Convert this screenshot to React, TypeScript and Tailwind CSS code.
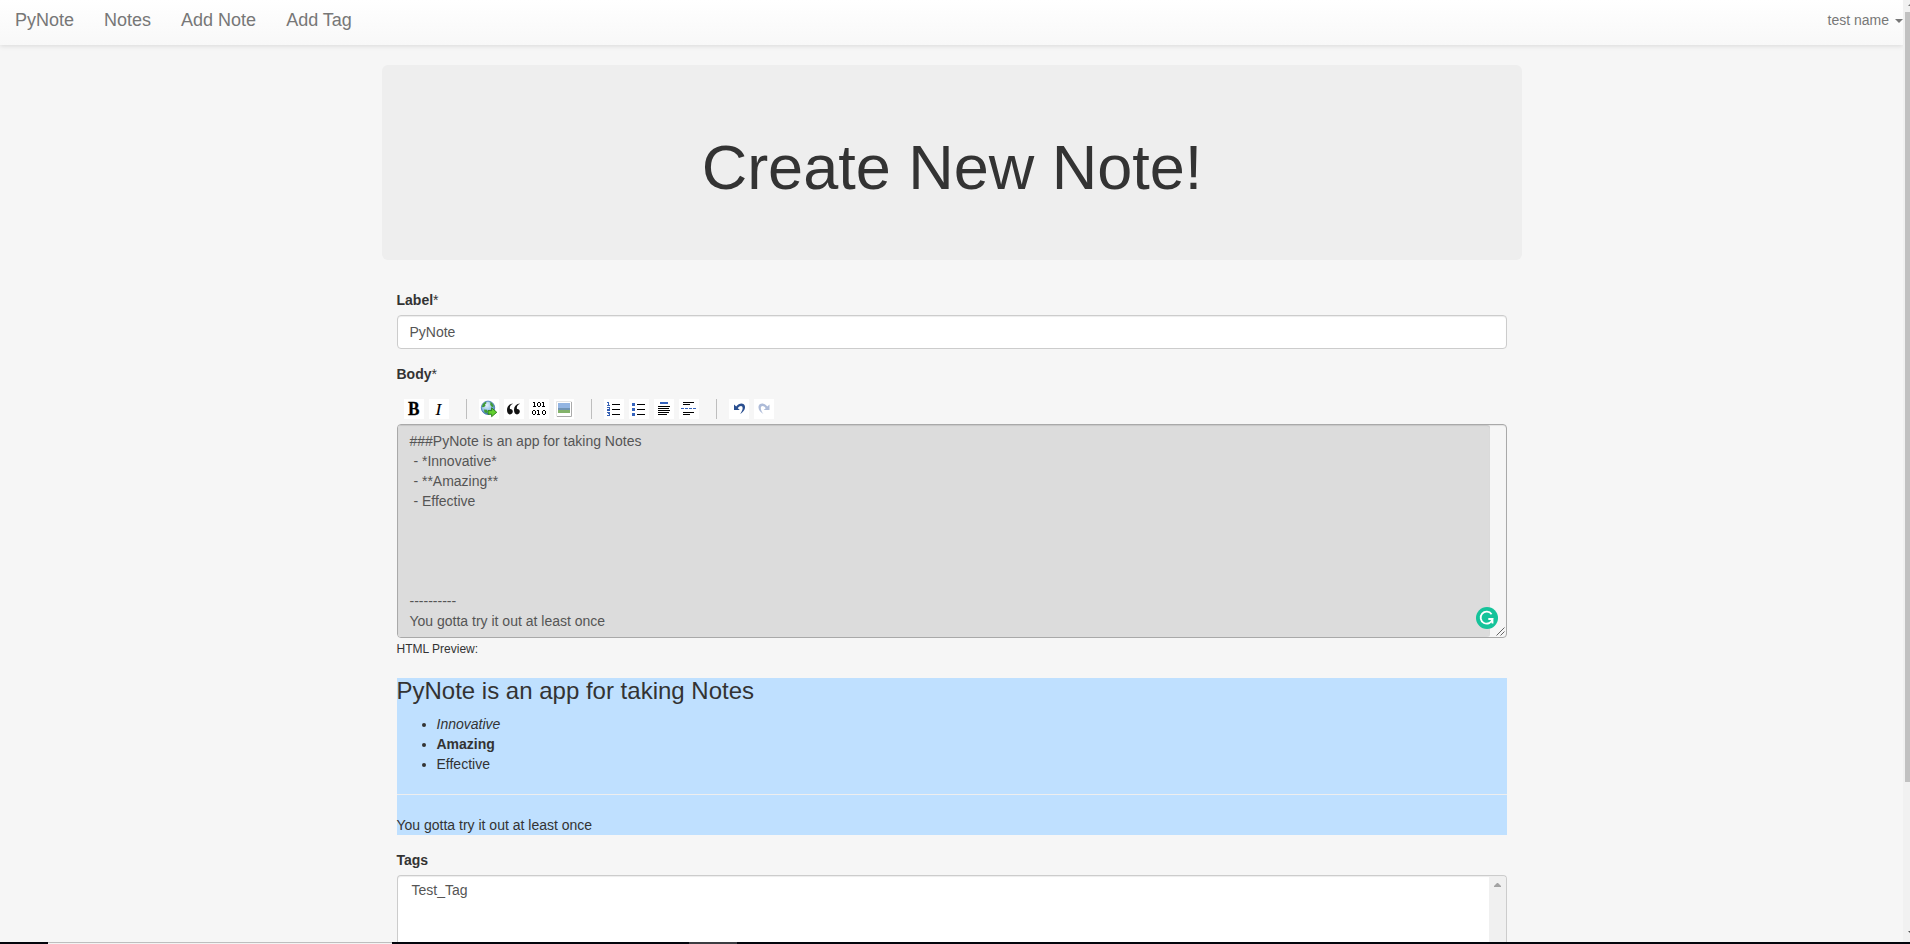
import React from 'react';

function Tool({ label, children }: { label: string; children: React.ReactNode }) {
  return (
    <button type="button" aria-label={label} className="size-5 shrink-0 bg-white">
      <svg width="20" height="20" viewBox="0 0 20 20" className="block">
        {children}
      </svg>
    </button>
  );
}

function Separator() {
  return <span className="ml-[17px] mr-3 h-5 w-px shrink-0 bg-[#bebebe]" />;
}

function Toolbar() {
  return (
    <div className="mt-[15px] flex h-5 items-center pl-[7.5px]">
      <div className="flex gap-[5px]">
        <Tool label="Strong">
          <text x="9.800" y="16" textAnchor="middle" fontSize="18" fontWeight="bold" fontFamily="Liberation Serif, serif" textLength="11.500" lengthAdjust="spacingAndGlyphs" stroke="#000" strokeWidth="0.3">B</text>
        </Tool>
        <Tool label="Emphasis">
          <text x="9.300" y="16" textAnchor="middle" fontSize="17.500" fontStyle="italic" fontFamily="Liberation Serif, serif" stroke="#000" strokeWidth="0.1">I</text>
        </Tool>
      </div>
      <Separator />
      <div className="flex gap-[5px]">
        <Tool label="Hyperlink">
          <defs>
            <radialGradient id="globe" cx="0.4" cy="0.3" r="0.75">
              <stop offset="0" stopColor="#e6f2fc" />
              <stop offset="0.5" stopColor="#9cc6ea" />
              <stop offset="1" stopColor="#2f65a8" />
            </radialGradient>
          </defs>
          <circle cx="9" cy="8.800" r="6.700" fill="url(#globe)" stroke="#3f74ad" strokeWidth="0.8" />
          <path d="M3.200 6.500C4 4.400 5.500 3.200 7.200 2.800L7.400 4.200L6 5.500L6.500 6.800L5 8L3 8.200Z M10.500 3L12.800 3.800L14.600 6.400L14.200 8.200L12.400 7.400L11.200 5.800L11.400 4.600Z M5 10.400L8 10.800L8.600 12.400L7.400 14.300L5.400 13.200Z" fill="#3f9b35" />
          <path d="M9 11.600H12.600V8.800L17.800 13.300L12.600 17.700V15.200H9Z" fill="#62d02f" stroke="#277c18" strokeWidth="0.9" />
        </Tool>
        <Tool label="Blockquote">
          <path d="M8.500 4.500C5 5.200 3 7.500 3 11C3 13.800 4.200 15.400 6 15.400C7.700 15.400 8.800 14.200 8.800 12.600C8.800 10.900 7.700 9.800 6 9.900C5.300 7.700 6.800 5.900 8.600 5.100Z M15.500 4.500C12 5.200 10 7.500 10 11C10 13.800 11.200 15.400 13 15.400C14.700 15.400 15.800 14.200 15.800 12.600C15.800 10.900 14.700 9.800 13 9.900C12.300 7.700 13.800 5.900 15.600 5.100Z" fill="#111" />
        </Tool>
        <Tool label="Code Sample">
          <g fill="none" stroke="#000" strokeWidth="1" shapeRendering="crispEdges">
            <path d="M4 3.500H6M5.500 3V8M4 7.500H7M8.500 4V7M9 3.500H11M11.500 4V7M9 7.500H11M13 3.500H15M14.500 3V8M13 7.500H16" />
            <path d="M3.500 12V15M4 11.500H6M6.500 12V15M4 15.500H6M8 11.500H10M9.500 11V16M8 15.500H11M13.500 12V15M14 11.500H16M16.500 12V15M14 15.500H16" />
          </g>
        </Tool>
        <Tool label="Image">
          <path d="M2.500 17.500V2.500H17.500" fill="none" stroke="#e4e4e4" />
          <path d="M3 17.500H17.500V3" fill="none" stroke="#aaa" />
          <rect x="4" y="4" width="12" height="5" fill="#93b5e2" />
          <rect x="4" y="9" width="12" height="2" fill="#7194b4" />
          <rect x="4" y="11" width="12" height="3" fill="#83b36b" />
        </Tool>
      </div>
      <Separator />
      <div className="flex gap-[5px]">
        <Tool label="Numbered List">
          <path d="M8 5.500H16M8 10.500H16M8 15.500H16" stroke="#000" shapeRendering="crispEdges" />
          <path d="M3 3.500H5M4.500 3V7M3 6.500H6M3 8.500H5.500V10.500H3.500V11.500H6M3 13.500H5.500V16.500H3M4 14.500H5.500" fill="none" stroke="#3560b4" shapeRendering="crispEdges" />
        </Tool>
        <Tool label="Bulleted List">
          <path d="M8 5.500H16M8 10.500H16M8 15.500H16" stroke="#000" shapeRendering="crispEdges" />
          <path d="M3 4H6V7H3ZM3 9H6V12H3ZM3 14H6V17H3Z" fill="#3563bd" />
        </Tool>
        <Tool label="Heading">
          <path d="M6 3H14V5H6Z" fill="#3563bd" />
          <path d="M4 7.500H16M4 9.500H15M4 11.500H16M4 13.500H15M4 15.500H13" stroke="#000" shapeRendering="crispEdges" />
        </Tool>
        <Tool label="Horizontal Rule">
          <path d="M4 3.500H15M4 5.500H11M4 13.500H15M4 15.500H11" stroke="#000" shapeRendering="crispEdges" />
          <path d="M2 9.500H17" stroke="#3563bd" strokeDasharray="3 1" shapeRendering="crispEdges" />
        </Tool>
      </div>
      <Separator />
      <div className="flex gap-[5px]">
        <Tool label="Undo">
          <path d="M5 5.500V11H10.800L8.800 9.200C10 7.200 12.200 6.200 13.200 7.500C14.400 9.200 13.200 12 11.200 15C14.500 13 16.800 10 15.800 6.800C14.500 3.300 9.800 3.800 7.200 7.500Z" fill="#2a4f90" />
        </Tool>
        <Tool label="Redo">
          <path d="M15.500 5.500V11H9.700L11.700 9.200C10.500 7.200 8.300 6.200 7.300 7.500C6.100 9.200 7.300 12 9.300 15C6 13 3.700 10 4.700 6.800C6 3.300 10.700 3.800 13.300 7.500Z" fill="#adbbd8" />
        </Tool>
      </div>
    </div>
  );
}

function NavBar() {
  return (
    <nav className="flex h-[45px] shrink-0 items-center justify-between bg-linear-to-b from-white to-[#f8f8f8] pb-[5px] pl-[15px] text-[#777] shadow-[0_1px_5px_rgba(0,0,0,0.12)]">
      <div className="flex gap-[30px] text-[18px] leading-5">
        <a>PyNote</a>
        <a>Notes</a>
        <a>Add Note</a>
        <a>Add Tag</a>
      </div>
      <a className="flex items-center gap-[6px] leading-5">
        test name
        <svg width="8" height="4" viewBox="0 0 8 4" className="mt-0.5">
          <path d="M0 0H8L4 4Z" fill="#777" />
        </svg>
      </a>
    </nav>
  );
}

function Assistant() {
  return (
    <svg width="22" height="22" viewBox="0 0 22 22" className="absolute right-[8px] bottom-[8px]">
      <circle cx="11" cy="11" r="11" fill="#15c39a" />
      <path d="M15.600 7.200A6 6 0 1 0 16.500 12H12.300M16.500 12V16.500" fill="none" stroke="#fff" strokeWidth="1.800" />
    </svg>
  );
}

const body = `###PyNote is an app for taking Notes
 - *Innovative*
 - **Amazing**
 - Effective




----------
You gotta try it out at least once`;

export default function App() {
  return (
    <div className="flex h-[944px] w-[1910px] flex-col overflow-hidden bg-[#f6f6f6] font-['Liberation_Sans',Arial,sans-serif] text-sm leading-5 text-[#333]">
      <div className="flex min-h-0 flex-1">
        <div className="flex min-w-0 flex-1 flex-col">
          <NavBar />
          <main className="mx-auto mt-5 flex min-h-0 w-[1140px] flex-1 flex-col">
            <header className="flex h-[195px] shrink-0 justify-center rounded-md bg-[#eee] pt-[68px] pl-px">
              <h1 className="text-[63px] leading-[69px]">Create New Note!</h1>
            </header>
            <form className="flex min-h-0 flex-1 flex-col px-[15px] pt-[30px]">
              <label className="block font-bold">Label<span className="font-normal">*</span></label>
              <div className="mt-[5px] h-[34px] shrink-0 rounded border border-[#ccc] bg-white px-3 py-1.5 text-[#555] shadow-[inset_0_1px_1px_rgba(0,0,0,0.075)]">PyNote</div>
              <label className="mt-[15px] block font-bold">Body<span className="font-normal">*</span></label>
              <Toolbar />
              <div className="relative mt-[5px] flex h-[214px] shrink-0 overflow-hidden rounded border border-[#a9a9a9] shadow-[inset_0_1px_1px_rgba(0,0,0,0.075)]">
                <div className="w-[1092px] whitespace-pre rounded-r-[3px] bg-[#dcdcdc] px-3 py-1.5 text-[#555] shadow-[inset_0_1px_1px_rgba(0,0,0,0.1)]">{body}</div>
                <Assistant />
                <svg width="9" height="9" viewBox="0 0 9 9" className="absolute right-px bottom-px">
                  <path d="M0.500 8.500L8.500 0.500M4.500 8.500L8.500 4.500" stroke="#555" strokeWidth="0.9" />
                </svg>
              </div>
              <p className="mt-[2px] text-xs leading-[18px]">HTML Preview:</p>
              <section className="mt-5 h-[157px] shrink-0 bg-[#bfe0ff]">
                <h3 className="text-2xl leading-[26px]">PyNote is an app for taking Notes</h3>
                <ul className="mt-[10px] list-disc pl-10">
                  <li><em>Innovative</em></li>
                  <li><strong>Amazing</strong></li>
                  <li>Effective</li>
                </ul>
                <hr className="my-5 border-0 border-t border-[#eee]" />
                <p>You gotta try it out at least once</p>
              </section>
              <label className="mt-[15px] block font-bold">Tags</label>
              <div className="mt-[5px] flex min-h-0 flex-1 justify-between overflow-hidden rounded-t border border-b-0 border-[#ccc] bg-white text-[#555] shadow-[inset_0_1px_1px_rgba(0,0,0,0.075)]">
                <span className="pl-[14px] pt-1">Test_Tag</span>
                <div className="mt-px flex w-[17px] justify-center bg-[#f0f0f0] pt-[6px]">
                  <svg width="7" height="4" viewBox="0 0 7 4"><path d="M0 4V3L3 0H4L7 3V4Z" fill="#a3a3a3" /></svg>
                </div>
              </div>
            </form>
          </main>
        </div>
        <aside className="flex w-[7px] flex-col items-end bg-[#f1f1f1]">
          <div className="flex h-3 items-start pt-1">
            <svg width="2" height="3" viewBox="0 0 2 3"><path d="M0 2L2 0V2Z" fill="#777" /></svg>
          </div>
          <div className="h-[770px] w-[5px] bg-[#c1c1c1]" />
          <svg width="2" height="3" viewBox="0 0 2 3" className="mt-[149px]"><path d="M0 0H2V2Z" fill="#555" /></svg>
        </aside>
      </div>
      <footer className="flex h-[2px] shrink-0 bg-[#03050c]">
        <div className="ml-12 w-[344px] border-t border-[#bebebe] bg-[#f3f3f3]" />
        <div className="ml-[297px] w-12 bg-[#3c3d42]" />
      </footer>
    </div>
  );
}
